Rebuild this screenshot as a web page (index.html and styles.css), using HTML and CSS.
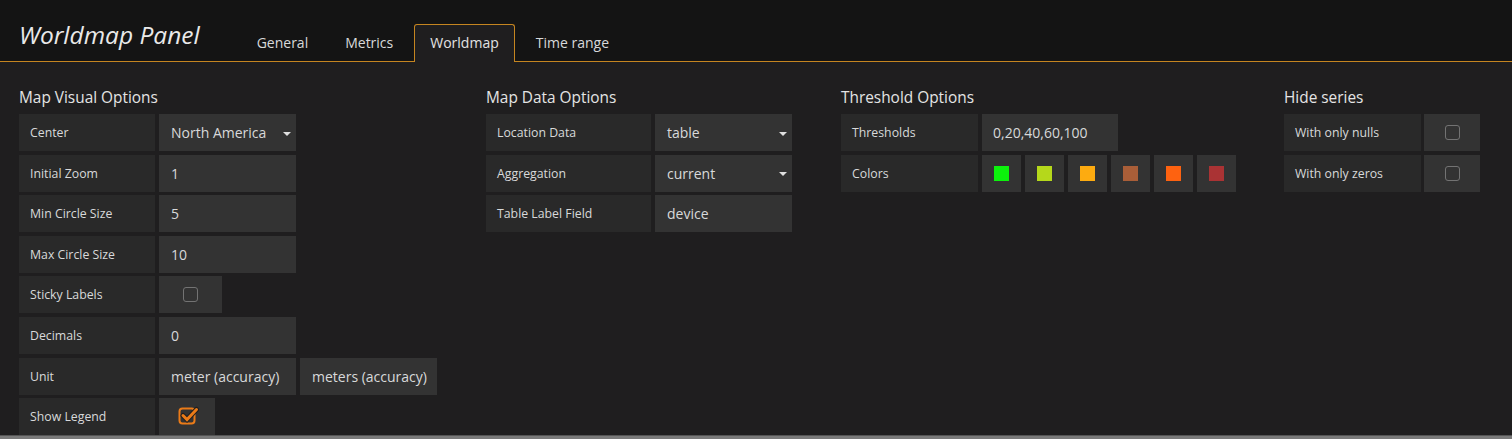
FILE: index.html
```html
<!DOCTYPE html>
<html>
<head>
<meta charset="utf-8">
<link rel="stylesheet" href="styles.css">
</head>
<body>
<div class="header">
  <div class="title">Worldmap Panel</div>
  <ul class="tabs">
    <li class="tab">General</li>
    <li class="tab">Metrics</li>
    <li class="tab active">Worldmap</li>
    <li class="tab">Time range</li>
  </ul>
</div>
<div class="content">
  <section class="section">
    <h5 class="heading">Map Visual Options</h5>
    <div class="row"><span class="label">Center</span><span class="input select">North America<i class="caret"></i></span></div>
    <div class="row"><span class="label">Initial Zoom</span><span class="input">1</span></div>
    <div class="row"><span class="label">Min Circle Size</span><span class="input">5</span></div>
    <div class="row"><span class="label">Max Circle Size</span><span class="input">10</span></div>
    <div class="row"><span class="label">Sticky Labels</span><span class="check wide"><i class="box"></i></span></div>
    <div class="row"><span class="label">Decimals</span><span class="input">0</span></div>
    <div class="row"><span class="label">Unit</span><span class="input">meter (accuracy)</span><span class="input">meters (accuracy)</span></div>
    <div class="row"><span class="label">Show Legend</span><span class="check"><svg class="checked" width="22" height="20" viewBox="0 0 22 20"><rect x="1.5" y="3.5" width="15" height="15" rx="3" fill="none" stroke="#eb7b18" stroke-width="2"/><path d="M5 10.5 L9 14.5 L18.5 4.5" fill="none" stroke="#1f1e1f" stroke-width="5" stroke-linecap="round"/><path d="M5 10.5 L9 14.5 L18.5 4.5" fill="none" stroke="#eb7b18" stroke-width="3" stroke-linecap="round"/></svg></span></div>
  </section>
  <section class="section">
    <h5 class="heading">Map Data Options</h5>
    <div class="row"><span class="label lw">Location Data</span><span class="input select">table<i class="caret"></i></span></div>
    <div class="row"><span class="label lw">Aggregation</span><span class="input select">current<i class="caret"></i></span></div>
    <div class="row"><span class="label lw">Table Label Field</span><span class="input">device</span></div>
  </section>
  <section class="section">
    <h5 class="heading">Threshold Options</h5>
    <div class="row"><span class="label l137">Thresholds</span><span class="input thr">0,20,40,60,100</span></div>
    <div class="row"><span class="label l137">Colors</span>
      <span class="swatch"><i style="background:#0cf20c"></i></span>
      <span class="swatch"><i style="background:#b5d81b"></i></span>
      <span class="swatch"><i style="background:#fdab10"></i></span>
      <span class="swatch"><i style="background:#a95e38"></i></span>
      <span class="swatch"><i style="background:#fe6210"></i></span>
      <span class="swatch"><i style="background:#aa3334"></i></span>
    </div>
  </section>
  <section class="section hide">
    <h5 class="heading">Hide series</h5>
    <div class="row narrow"><span class="label l137">With only nulls</span><span class="check"><i class="box"></i></span></div>
    <div class="row narrow"><span class="label l137">With only zeros</span><span class="check"><i class="box"></i></span></div>
  </section>
</div>
<div class="footer"></div>
</body>
</html>
```
FILE: styles.css
```css
html, body {
  margin: 0;
  padding: 0;
  height: 439px;
  overflow: hidden;
}
body {
  background: #1f1e1f;
  font-family: "Open Sans", "Liberation Sans", sans-serif;
  color: #d8d9da;
  position: relative;
}
.header {
  height: 61px;
  background: #141414;
  border-bottom: 1px solid #c58520;
  display: flex;
  align-items: flex-end;
  padding-left: 19px;
}
.title {
  font-size: 24.5px;
  font-style: italic;
  line-height: 30px;
  color: #e9e9e9;
  margin-bottom: 11px;
}
.tabs {
  list-style: none;
  margin: 0 0 -1px 41px;
  padding: 0;
  display: flex;
}
.tab {
  font-size: 14px;
  line-height: 36px;
  height: 37px;
  padding: 0 15px;
  border: 1px solid transparent;
  border-bottom: none;
  border-radius: 3px 3px 0 0;
  margin-right: 5px;
  color: #d8d9da;
}
.tab.active {
  background: #1f1e1f;
  border-color: #c58520;
  color: #e3e3e3;
}
.content {
  display: flex;
  align-items: flex-start;
  column-gap: 49px;
  padding: 26px 0 0 19px;
}
.section.hide {
  margin-left: -1px;
}
.heading {
  margin: 0 0 6px;
  font-size: 15.4px;
  line-height: 20px;
  font-weight: normal;
  color: #e4e4e4;
}
.row {
  display: flex;
  gap: 4px;
  height: 37px;
  margin-bottom: 3.6px;
}
.row.narrow {
  gap: 3px;
}
.label {
  width: 136px;
  box-sizing: border-box;
  background: #292929;
  font-size: 12.3px;
  padding-left: 11px;
  display: flex;
  align-items: center;
  color: #d8d9da;
}
.label.lw {
  width: 165px;
}
.label.l137 {
  width: 137px;
}
.input {
  width: 137px;
  box-sizing: border-box;
  background: #333333;
  font-size: 14px;
  padding-left: 12px;
  display: flex;
  align-items: center;
  color: #d8d9da;
  white-space: nowrap;
}
.input.thr {
  width: 136px;
  padding-left: 11px;
}
.caret {
  margin-left: auto;
  margin-right: 5px;
  margin-top: 2px;
  width: 0;
  height: 0;
  border-top: 4px solid #e0e0e0;
  border-left: 4px solid transparent;
  border-right: 4px solid transparent;
}
.check {
  width: 56px;
  background: #333333;
  display: flex;
  align-items: center;
  justify-content: center;
}
.check.wide {
  width: 63px;
}
.box {
  width: 13px;
  height: 13px;
  border: 1.5px solid #737373;
  border-radius: 3px;
}
.checked {
  margin-left: 3px;
  margin-top: -3px;
}
.swatch {
  width: 39px;
  background: #333333;
  display: flex;
  align-items: center;
  justify-content: center;
}
.swatch i {
  width: 15px;
  height: 15px;
}
.footer {
  position: absolute;
  left: 0;
  right: 0;
  top: 435px;
  height: 4px;
  background: #7a7a7a;
  border-top: 1px solid #555;
  box-sizing: border-box;
}
```
